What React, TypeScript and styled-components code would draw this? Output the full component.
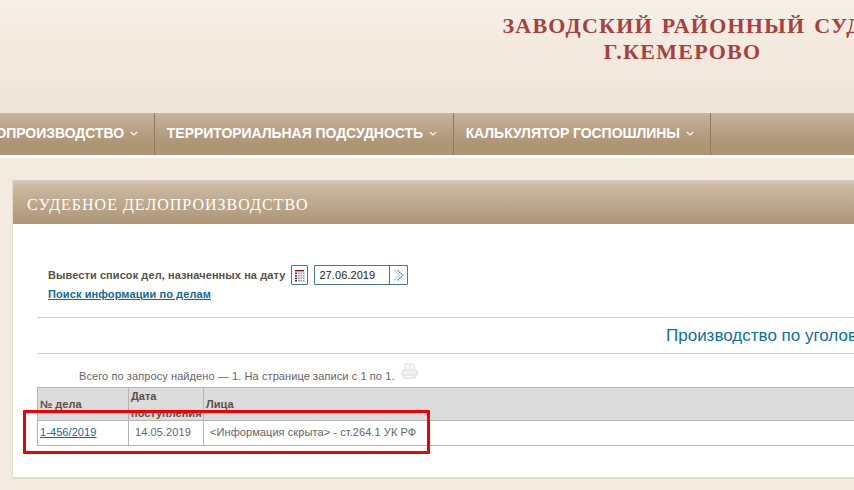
import React from "react";
import styled, { createGlobalStyle } from "styled-components";

const GlobalStyle = createGlobalStyle`
  html, body {
    margin: 0;
    padding: 0;
    width: 854px;
    height: 490px;
    overflow: hidden;
    background: #f3eae0;
    font-family: "Liberation Sans", Arial, sans-serif;
  }
`;

const Page = styled.div`
  width: 854px;
  height: 490px;
  overflow: hidden;
  position: relative;
`;

const Header = styled.header`
  height: 113px;
  box-sizing: border-box;
  padding: 13px 0 0 502px;
  background: linear-gradient(180deg, #f6f0e8 0%, #f3e9de 45%, #f0e5d8 100%);
`;

const Title = styled.h1`
  margin: 0;
  width: 361px;
  font-family: "Liberation Serif", "Times New Roman", serif;
  font-size: 22px;
  line-height: 26px;
  font-weight: bold;
  letter-spacing: 1.25px;
  word-spacing: 2px;
  white-space: nowrap;
  text-align: center;
  color: #a8403f;
`;

const Nav = styled.nav`
  height: 42px;
  display: flex;
  background: linear-gradient(180deg, #cbb9a3 0%, #c4b098 8%, #ad9575 72%, #ad9575 100%);
`;

const NavItem = styled.div<{ $width: number; $offset?: number }>`
  flex: none;
  width: ${(props) => props.$width}px;
  margin-left: ${(props) => props.$offset || 0}px;
  box-sizing: border-box;
  padding: 0 16px 2px 0;
  display: flex;
  align-items: center;
  justify-content: flex-end;
  gap: 6px;
  border-right: 1px solid #917b5f;
  color: #fff;
  font-size: 14px;
  font-weight: bold;
  letter-spacing: -0.05px;
  white-space: nowrap;
`;

const Gap = styled.div`
  height: 3px;
  background: #fff;
`;

const Content = styled.main`
  padding: 22px 0 0 12px;
`;

const Panel = styled.section`
  width: 860px;
  height: 299px;
  box-sizing: border-box;
  background: #fff;
  border-left: 1px solid #e6dccd;
  border-bottom: 2px solid #e6dccd;
`;

const PanelHead = styled.div`
  height: 44px;
  box-sizing: border-box;
  padding: 5px 0 0 14px;
  display: flex;
  align-items: center;
  background: linear-gradient(180deg, #d8cbb9 0%, #cbb9a3 12%, #ad9575 100%);
  font-family: "Liberation Serif", "Times New Roman", serif;
  font-size: 16px;
  letter-spacing: 1px;
  color: #fff;
  white-space: nowrap;
`;

const PanelBody = styled.div`
  padding: 41px 0 0 24px;
`;

const Filter = styled.div`
  padding-left: 11px;
`;

const FilterRow = styled.div`
  display: flex;
  align-items: center;
  height: 20px;
  font-size: 11px;
  font-weight: bold;
  letter-spacing: 0.08px;
  color: #5a5048;
  white-space: nowrap;
`;

const CalendarBox = styled.div`
  width: 15px;
  height: 18px;
  margin-left: 6px;
  border: 1px solid #4a749c;
  border-radius: 1px;
  display: flex;
  align-items: center;
  justify-content: center;
`;

const DateBox = styled.div`
  width: 92px;
  height: 18px;
  margin-left: 6px;
  display: flex;
  border: 1px solid #4a749c;
  border-radius: 1px;
`;

const DateValue = styled.div`
  flex: 1;
  padding-left: 4px;
  border-right: 1px solid #4a749c;
  color: #222;
  font-size: 11px;
  font-weight: normal;
  line-height: 18px;
`;

const DateButton = styled.div`
  width: 17px;
  display: flex;
  align-items: center;
  justify-content: center;
`;

const SearchLink = styled.a`
  display: block;
  margin-top: 1px;
  font-size: 11px;
  font-weight: bold;
  line-height: 17px;
  letter-spacing: 0.1px;
  color: #0f6a9c;
  text-decoration: underline;
`;

const Kind = styled.div`
  margin-top: 14px;
  height: 37px;
  box-sizing: border-box;
  border-top: 1px solid #cfcfcf;
  border-bottom: 1px solid #cfcfcf;
  padding-left: 629px;
  font-size: 17px;
  line-height: 35px;
  color: #0f6fa5;
  white-space: nowrap;
`;

const Summary = styled.div`
  height: 33px;
  box-sizing: border-box;
  padding-left: 42px;
  display: flex;
  align-items: flex-start;
  gap: 6px;
  font-size: 11px;
  letter-spacing: 0.09px;
  color: #666;
  white-space: nowrap;
`;

const SummaryText = styled.span`
  margin-top: 15px;
  line-height: 14px;
`;

const PrintIcon = styled.svg`
  margin-top: 9px;
`;

const Table = styled.div`
  width: 823px;
  font-size: 11px;
  border-top: 1px solid #b5b5b5;
  border-left: 1px solid #b5b5b5;
`;

const Row = styled.div<{ $head?: boolean }>`
  display: grid;
  grid-template-columns: 91px 75px 1fr;
  height: ${(props) => (props.$head ? 33 : 25)}px;
  box-sizing: border-box;
  border-bottom: 1px solid #b5b5b5;
  background: ${(props) => (props.$head ? "#dcdcdc" : "#fff")};
`;

const HeadCell = styled.div<{ $wrap?: boolean }>`
  box-sizing: border-box;
  height: 32px;
  padding-left: 2px;
  display: flex;
  align-items: ${(props) => (props.$wrap ? "flex-start" : "flex-end")};
  overflow: hidden;
  border-right: 1px solid #b5b5b5;
  font-weight: bold;
  color: #5a5048;
  line-height: 17px;
  padding-bottom: ${(props) => (props.$wrap ? 0 : 7)}px;
`;

const Cell = styled.div<{ $pad: number }>`
  box-sizing: border-box;
  padding-left: ${(props) => props.$pad}px;
  border-right: 1px solid #b5b5b5;
  line-height: 23px;
  letter-spacing: 0.08px;
  color: #666;
  white-space: nowrap;
`;

const CaseLink = styled.a`
  color: #0f6a9c;
  text-decoration: underline;
`;

const Highlight = styled.div`
  position: absolute;
  left: 23px;
  top: 410px;
  width: 407px;
  height: 44px;
  box-sizing: border-box;
  border: 3px solid #f00000;
  border-radius: 1px;
`;

const CalendarIcon = () => (
  <svg width="12" height="13" viewBox="0 0 12 13">
    <rect x="1" y="1" width="9" height="1.4" fill="#8a1010" />
    <rect x="1" y="3.5" width="2" height="1.5" fill="#8a1010" />
    <rect x="1" y="6" width="2" height="1.5" fill="#8a1010" />
    <rect x="1" y="8.5" width="2" height="1.5" fill="#8a1010" />
    <rect x="1" y="11" width="2" height="1.5" fill="#8a1010" />
    {[4, 6.4, 8.8].map((x) =>
      [3.5, 6, 8.5, 11].map((y) => (
        <rect key={`${x}-${y}`} x={x} y={y} width="1.7" height="1.5" fill="#7f9cc0" />
      ))
    )}
  </svg>
);

const ArrowIcon = () => (
  <svg width="11" height="12" viewBox="0 0 11 12">
    {[
      [1, 1], [2.5, 2.5], [4, 4], [5.5, 5.5], [4, 7], [2.5, 8.5], [1, 10],
      [4.5, 1], [6, 2.5], [7.5, 4], [9, 5.5], [7.5, 7], [6, 8.5], [4.5, 10],
    ].map(([x, y], i) => (
      <rect key={i} x={x} y={y} width="1.5" height="1.5" fill={i < 7 ? "#a9c8e4" : "#5f93c4"} />
    ))}
  </svg>
);

const Chevron = () => (
  <svg width="8" height="5" viewBox="0 0 8 5" fill="none">
    <path d="M.8.8 4 4 7.2.8" stroke="#fff" strokeWidth="1.1" />
  </svg>
);

const App = () => {
  return (
    <Page>
      <GlobalStyle />
      <Header>
        <Title>
          ЗАВОДСКИЙ РАЙОННЫЙ СУД
          <br />
          Г.КЕМЕРОВО
        </Title>
      </Header>
      <Nav>
        <NavItem $width={215} $offset={-60}>
          СУДОПРОИЗВОДСТВО <Chevron />
        </NavItem>
        <NavItem $width={299}>
          ТЕРРИТОРИАЛЬНАЯ ПОДСУДНОСТЬ <Chevron />
        </NavItem>
        <NavItem $width={257}>
          КАЛЬКУЛЯТОР ГОСПОШЛИНЫ <Chevron />
        </NavItem>
      </Nav>
      <Gap />
      <Content>
        <Panel>
          <PanelHead>СУДЕБНОЕ ДЕЛОПРОИЗВОДСТВО</PanelHead>
          <PanelBody>
            <Filter>
              <FilterRow>
                Вывести список дел, назначенных на дату
                <CalendarBox>
                  <CalendarIcon />
                </CalendarBox>
                <DateBox>
                  <DateValue>27.06.2019</DateValue>
                  <DateButton>
                    <ArrowIcon />
                  </DateButton>
                </DateBox>
              </FilterRow>
              <SearchLink>Поиск информации по делам</SearchLink>
            </Filter>
            <Kind>Производство по уголовным делам</Kind>
            <Summary>
              <SummaryText>Всего по запросу найдено — 1. На странице записи с 1 по 1.</SummaryText>
              <PrintIcon width="17" height="17" viewBox="0 0 17 17" fill="none">
                <path d="M4 7V1h8l1 1v5" stroke="#dcdcdc" />
                <path d="M6 3h5M6 5h5" stroke="#e4e4e4" />
                <rect x="1" y="7" width="15" height="6" rx="1.5" fill="#f2f2f2" stroke="#dcdcdc" />
                <rect x="3" y="12" width="11" height="3" fill="#f8f8f8" stroke="#dcdcdc" />
              </PrintIcon>
            </Summary>
            <Table>
              <Row $head>
                <HeadCell>№ дела</HeadCell>
                <HeadCell $wrap>
                  <span>
                    Дата
                    <br />
                    поступления
                  </span>
                </HeadCell>
                <HeadCell>Лица</HeadCell>
              </Row>
              <Row>
                <Cell $pad={2}>
                  <CaseLink>1-456/2019</CaseLink>
                </Cell>
                <Cell $pad={6}>14.05.2019</Cell>
                <Cell $pad={6}>&lt;Информация скрыта&gt; - ст.264.1 УК РФ</Cell>
              </Row>
            </Table>
          </PanelBody>
        </Panel>
      </Content>
      <Highlight />
    </Page>
  );
};

export default App;
